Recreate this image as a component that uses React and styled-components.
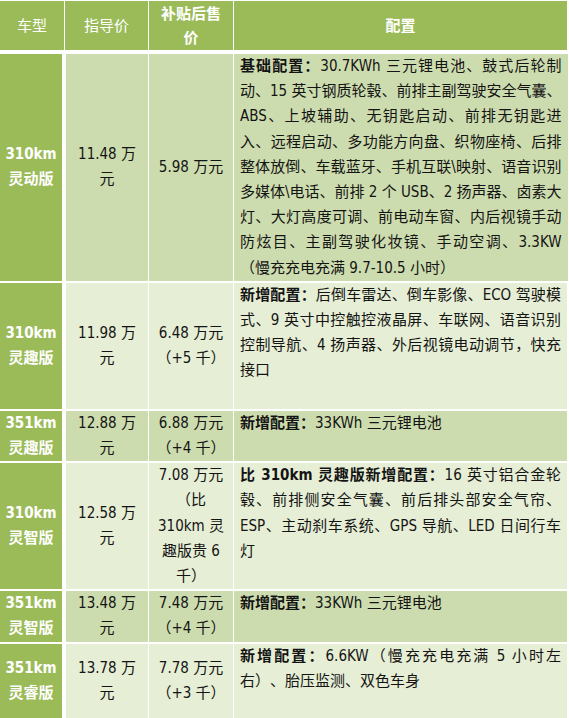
import React from "react";
import styled, { createGlobalStyle } from "styled-components";

const GlobalStyle = createGlobalStyle`
  html, body {
    margin: 0;
    padding: 0;
    background: #ffffff;
  }
  body {
    font-family: "DejaVu Sans Condensed", "Noto Sans CJK SC", sans-serif;
    text-spacing-trim: space-all;
  }
`;

const TONES = {
  dark: "#cddcae",
  light: "#e6eed5",
};

const Table = styled.div`
  width: 567px;
  display: flex;
  flex-direction: column;
  gap: 2px;
  padding-top: 1px;
  font-size: 15px;
  color: #141414;
`;

const HeadRow = styled.div`
  display: grid;
  grid-template-columns: 64px 83px 84px 1fr;
  column-gap: 1px;
  height: 49px;
  margin-bottom: 2px;
`;

const HeadCell = styled.div`
  background: #9bbb59;
  color: #ffffff;
  display: flex;
  flex-direction: column;
  align-items: center;
  justify-content: center;
  text-align: center;
  line-height: 24px;
  font-weight: ${(p) => (p.$bold ? 700 : 400)};
`;

const BodyRow = styled.div`
  display: grid;
  grid-template-columns: 65px 82px 84px 1fr;
  column-gap: 1px;
  line-height: 25.2px;
`;

const ModelCell = styled.div`
  background: #9bbb59;
  margin-right: 3px;
  color: #ffffff;
  font-weight: 700;
  display: flex;
  flex-direction: column;
  align-items: center;
  justify-content: center;
  text-align: center;
`;

const PriceCell = styled.div`
  background: ${(p) => TONES[p.$tone]};
  display: flex;
  flex-direction: column;
  align-items: center;
  justify-content: center;
  text-align: center;
  white-space: nowrap;
`;

const ConfigCell = styled.div`
  background: ${(p) => TONES[p.$tone]};
  padding: 0 6px;
  display: flex;
  flex-direction: column;
`;

const Line = styled.div`
  white-space: nowrap;
  text-align: ${(p) => (p.$last ? "left" : "justify")};
  text-align-last: ${(p) => (p.$last ? "left" : "justify")};
  min-height: 25.2px;
`;

const Lead = styled.b`
  font-weight: 700;
`;

const rows = [
  {
    tone: "dark",
    model: ["310km", "灵动版"],
    guide: ["11.48 万", "元"],
    sub: ["5.98 万元"],
    lead: "基础配置：",
    lines: [
      "30.7KWh 三元锂电池、鼓式后轮制",
      "动、15 英寸钢质轮毂、前排主副驾驶安全气囊、",
      "ABS、上坡辅助、无钥匙启动、前排无钥匙进",
      "入、远程启动、多功能方向盘、织物座椅、后排",
      "整体放倒、车载蓝牙、手机互联\\映射、语音识别",
      "多媒体\\电话、前排 2 个 USB、2 扬声器、卤素大",
      "灯、大灯高度可调、前电动车窗、内后视镜手动",
      "防炫目、主副驾驶化妆镜、手动空调、3.3KW",
      "（慢充充电充满 9.7-10.5 小时）",
    ],
    blank: 0,
  },
  {
    tone: "light",
    model: ["310km", "灵趣版"],
    guide: ["11.98 万", "元"],
    sub: ["6.48 万元", "（+5 千）"],
    lead: "新增配置：",
    lines: [
      "后倒车雷达、倒车影像、ECO 驾驶模",
      "式、9 英寸中控触控液晶屏、车联网、语音识别",
      "控制导航、4 扬声器、外后视镜电动调节，快充",
      "接口",
    ],
    blank: 1,
  },
  {
    tone: "dark",
    model: ["351km", "灵趣版"],
    guide: ["12.88 万", "元"],
    sub: ["6.88 万元", "（+4 千）"],
    lead: "新增配置：",
    lines: ["33KWh 三元锂电池"],
    blank: 1,
  },
  {
    tone: "light",
    model: ["310km", "灵智版"],
    guide: ["12.58 万", "元"],
    sub: ["7.08 万元", "（比", "310km 灵", "趣版贵 6", "千）"],
    lead: "比 310km 灵趣版新增配置：",
    lines: [
      "16 英寸铝合金轮",
      "毂、前排侧安全气囊、前后排头部安全气帘、",
      "ESP、主动刹车系统、GPS 导航、LED 日间行车",
      "灯",
    ],
    blank: 1,
  },
  {
    tone: "dark",
    model: ["351km", "灵智版"],
    guide: ["13.48 万", "元"],
    sub: ["7.48 万元", "（+4 千）"],
    lead: "新增配置：",
    lines: ["33KWh 三元锂电池"],
    blank: 1,
  },
  {
    tone: "light",
    model: ["351km", "灵睿版"],
    guide: ["13.78 万", "元"],
    sub: ["7.78 万元", "（+3 千）"],
    lead: "新增配置：",
    lines: ["6.6KW（慢充充电充满 5 小时左", "右）、胎压监测、双色车身"],
    blank: 1,
  },
];

function Stack({ items }) {
  return items.map((t, i) => <div key={i}>{t}</div>);
}

function ConfigText({ row }) {
  const last = row.lines.length - 1;
  return (
    <>
      {row.lines.map((text, i) => (
        <Line key={i} $last={i === last}>
          {i === 0 && <Lead>{row.lead}</Lead>}
          {text}
        </Line>
      ))}
      {Array.from({ length: row.blank }).map((_, i) => (
        <Line key={"b" + i} $last />
      ))}
    </>
  );
}

export default function App() {
  return (
    <>
      <GlobalStyle />
      <Table>
        <HeadRow>
          <HeadCell>车型</HeadCell>
          <HeadCell>指导价</HeadCell>
          <HeadCell $bold>
            <Stack items={["补贴后售", "价"]} />
          </HeadCell>
          <HeadCell $bold>配置</HeadCell>
        </HeadRow>
        {rows.map((row, i) => (
          <BodyRow key={i}>
            <ModelCell>
              <Stack items={row.model} />
            </ModelCell>
            <PriceCell $tone={row.tone}>
              <Stack items={row.guide} />
            </PriceCell>
            <PriceCell $tone={row.tone}>
              <Stack items={row.sub} />
            </PriceCell>
            <ConfigCell $tone={row.tone}>
              <ConfigText row={row} />
            </ConfigCell>
          </BodyRow>
        ))}
      </Table>
    </>
  );
}
